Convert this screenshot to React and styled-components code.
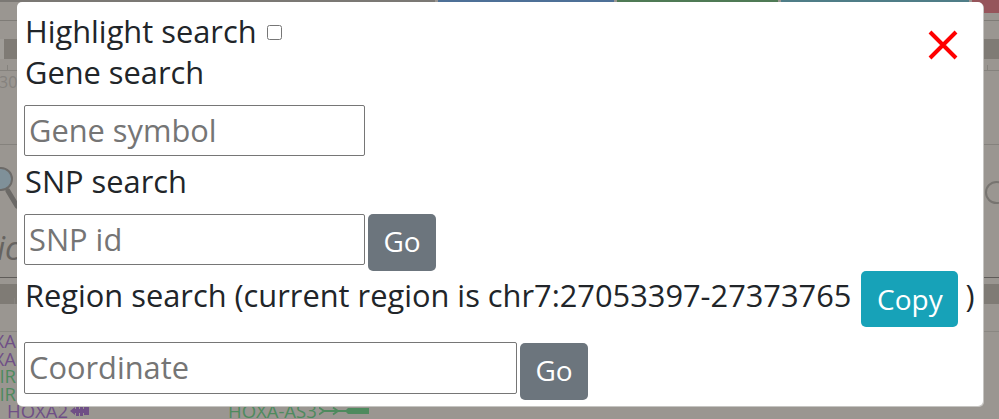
import { createGlobalStyle, styled } from "styled-components";

const GlobalStyle = createGlobalStyle`
  html, body {
    margin: 0;
    width: 999px;
    height: 419px;
    overflow: hidden;
    background: #9a9691;
  }
  body {
    font-family: "Open Sans", "Noto Sans", sans-serif;
  }
`;

const Page = styled.div`
  position: relative;
  width: 999px;
  height: 419px;
  overflow: hidden;
  background: #9a9691;
`;

/* dimmed page behind the dialog */
const TopStrip = styled.div`
  display: flex;
  align-items: flex-start;
  height: 13px;
  gap: 3px;
`;

const Tab = styled.div`
  flex: ${(p) => (p.$w ? `0 0 ${p.$w}px` : "1")};
  height: ${(p) => p.$h || 2}px;
  background: ${(p) => p.$bg};
`;

const Rule = styled.div`
  height: 1px;
  margin-top: ${(p) => p.$top}px;
  background: ${(p) => p.$bg};
`;

const Band = styled.div`
  display: flex;
  align-items: flex-end;
  justify-content: space-between;
  height: 20px;
  margin-top: ${(p) => p.$top}px;
  padding: 0 11px 0 14px;
  background: #7f7b75;
  border-left: ${(p) => (p.$edge ? "4px solid #a09d98" : "0")};
`;

const TickRow = styled.div`
  display: flex;
  justify-content: space-between;
  height: 5px;
  margin-top: 6px;
  padding: 0 11px 0 7px;
`;

const Tick = styled.div`
  width: 1px;
  height: ${(p) => p.$h || 5}px;
  background: #85827d;
`;

const RulerLabel = styled.div`
  height: 16px;
  margin-top: 3px;
  margin-left: -1px;
  color: #85827e;
  font-size: 16px;
  line-height: 16px;
`;

const ToolRow = styled.div`
  display: flex;
  justify-content: space-between;
  height: 52px;
  margin-top: 15px;
`;

const Ring = styled.div`
  flex: none;
  width: 23px;
  height: 23px;
  margin: 21px -9px 0 0;
  box-sizing: border-box;
  border: 2px solid #777470;
  border-radius: 50%;
`;

const Lens = styled.svg`
  width: 20px;
  height: 52px;
`;

const ToolText = styled.div`
  height: 32px;
  margin: 20px 0 0 -3px;
  color: #666360;
  font-size: 32px;
  font-style: italic;
  line-height: 32px;
`;

const TrackList = styled.div`
  display: flex;
  flex-direction: column;
  width: 16px;
`;

const TrackLabel = styled.div`
  display: flex;
  justify-content: flex-end;
  height: 17.5px;
  color: ${(p) => p.$color};
  font-size: 18.5px;
  line-height: 17.5px;
  white-space: nowrap;
`;

const GeneRow = styled.div`
  display: flex;
  padding-left: 7px;
`;

const Gene = styled.div`
  display: flex;
  align-items: center;
  flex: ${(p) => (p.$w ? `0 0 ${p.$w}px` : "none")};
  gap: 2px;
  height: 17.5px;
  color: ${(p) => p.$color};
  font-size: 18.5px;
  line-height: 17.5px;
  white-space: nowrap;
`;

const GeneGlyph = styled.svg`
  flex: none;
  height: 14px;
  width: ${(p) => p.$w}px;
`;

/* dialog */
const Modal = styled.div`
  position: absolute;
  left: 17px;
  top: 2px;
  width: 966px;
  height: 404px;
  box-sizing: border-box;
  padding: 11px 7px 0;
  background: #fff;
  border-radius: 5px;
  box-shadow: 1px 1px 0 #c6c5c2;
  color: #212529;
  font-size: 30.8px;
`;

const CloseIcon = styled.svg`
  position: absolute;
  top: 28px;
  right: 25px;
  width: 30px;
  height: 30px;
`;

const Row = styled.div`
  display: flex;
  align-items: ${(p) => p.$align || "center"};
  box-sizing: border-box;
  height: ${(p) => p.$h}px;
  margin-top: ${(p) => p.$top || 0}px;
`;

const Label = styled.div`
  display: flex;
  align-items: center;
  box-sizing: border-box;
  height: ${(p) => p.$h}px;
  margin-top: ${(p) => p.$top || 0}px;
  padding: 0 0 4px 1px;
`;

const RegionText = styled.span`
  margin: 0 0 8px 1px;
`;

const Check = styled.input`
  width: 15px;
  height: 15px;
  margin: 3px 0 0 10px;
`;

const Field = styled.input`
  box-sizing: border-box;
  width: ${(p) => p.$width}px;
  height: ${(p) => p.$height || 51}px;
  padding: 0 3px 2px 4px;
  border: 1px solid #767676;
  border-radius: 2px;
  font: inherit;
  outline: none;
  &::placeholder {
    color: #757575;
  }
`;

const Button = styled.button`
  box-sizing: border-box;
  width: ${(p) => p.$width}px;
  height: ${(p) => p.$height}px;
  padding: 0 0 ${(p) => p.$lift || 0}px;
  margin: ${(p) => p.$margin};
  border: 0;
  border-radius: 5px;
  background: ${(p) => p.$bg};
  color: #fff;
  font-family: inherit;
  font-size: 28px;
`;

const Paren = styled.span`
  margin: 0 0 8px 7px;
`;

const PURPLE = "#6f4f86";
const GREEN = "#4e8a5e";

export default function App() {
  return (
    <Page>
      <GlobalStyle />

      <TopStrip>
        <Tab $w={435} $bg="#7b7874" />
        <Tab $w={176} $bg="#4e7097" />
        <Tab $w={161} $bg="#4f7a55" />
        <Tab $bg="#4f7d87" />
        <Tab $w={27} $h={13} $bg="#96555b" />
      </TopStrip>
      <Rule $top={7} $bg="#7f7c77" />
      <Band $top={18} $edge />
      <TickRow>
        <Tick />
        <Tick />
      </TickRow>
      <Rule $top={0} $bg="#85827d" />
      <RulerLabel>30.</RulerLabel>
      <Rule $top={54} $bg="#85827d" />
      <ToolRow>
        <Lens viewBox="0 0 20 52">
          <circle cx="1" cy="19" r="11" fill="#7f9099" stroke="#6c6a68" strokeWidth="2" />
          <path d="M8 31 L17 46" stroke="#6b6966" strokeWidth="5" strokeLinecap="round" />
        </Lens>
        <Ring />
      </ToolRow>
      <ToolText>ic</ToolText>
      <Rule $top={13} $bg="#5f5c59" />
      <Band $top={6}>
        <Tick $h={6} />
      </Band>
      <Rule $top={27} $bg="#8a8782" />
      <TrackList>
        <TrackLabel $color={PURPLE}>XA</TrackLabel>
        <TrackLabel $color={PURPLE}>XA</TrackLabel>
        <TrackLabel $color={GREEN}>IR</TrackLabel>
        <TrackLabel $color={GREEN}>IR</TrackLabel>
      </TrackList>
      <GeneRow>
        <Gene $w={221} $color={PURPLE}>
          HOXA2
          <GeneGlyph $w={20} viewBox="0 0 20 14">
            <path d="M0 7 L5 3 V11 Z M5 5 H6 V9 H5 Z M6 2 H9 V12 H6 Z M9 5 H10 V9 H9 Z M10 2 H13 V12 H10 Z M13 5 H14 V9 H13 Z M14 3 H19 V11 H14 Z" fill={PURPLE} />
          </GeneGlyph>
        </Gene>
        <Gene $color={GREEN}>
          HOXA-AS3
          <GeneGlyph $w={51} viewBox="0 0 51 14">
            <path d="M0 3.5 L5 7 L0 10.5 M5 7 H28 M14 3.5 L19 7 L14 10.5" stroke={GREEN} strokeWidth="1.8" fill="none" />
            <path d="M26 7 L29 4 H50 V10 H29 Z" fill={GREEN} />
          </GeneGlyph>
        </Gene>
      </GeneRow>

      <Modal>
        <CloseIcon viewBox="0 0 30 30">
          <path d="M2 2 L28 28 M28 2 L2 28" stroke="#f00" strokeWidth="4" />
        </CloseIcon>
        <Label $h={40}>
          Highlight search
          <Check type="checkbox" />
        </Label>
        <Label $h={41}>Gene search</Label>
        <Row $h={51} $top={11}>
          <Field $width={341} placeholder="Gene symbol" />
        </Row>
        <Label $h={41} $top={6}>SNP search</Label>
        <Row $h={57} $top={11} $align="flex-start">
          <Field $width={341} placeholder="SNP id" />
          <Button $width={68} $height={57} $lift={3} $margin="0 0 0 3px" $bg="#6c757d">Go</Button>
        </Row>
        <Row $h={56}>
          <RegionText>Region search (current region is chr7:27053397-27373765</RegionText>
          <Button $width={97} $height={56} $margin="0 0 0 10px" $bg="#17a2b8">Copy</Button>
          <Paren>)</Paren>
        </Row>
        <Row $h={58} $top={15} $align="flex-start">
          <Field $width={493} $height={52} placeholder="Coordinate" />
          <Button $width={68} $height={57} $lift={3} $margin="1px 0 0 3px" $bg="#6c757d">Go</Button>
        </Row>
      </Modal>
    </Page>
  );
}
